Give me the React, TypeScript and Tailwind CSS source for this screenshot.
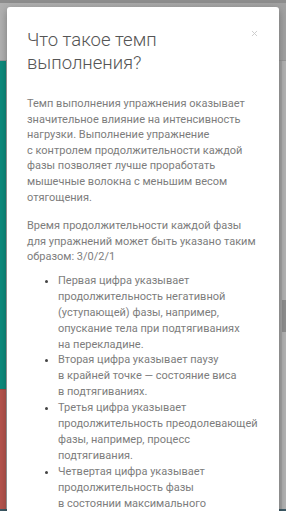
import { X } from "lucide-react"

const steps = [
  "Первая цифра указывает продолжительность негативной (уступающей) фазы, например, опускание тела при подтягиваниях на\u00a0перекладине.",
  "Вторая цифра указывает паузу в\u00a0крайней точке — состояние виса в\u00a0подтягиваниях.",
  "Третья цифра указывает продолжительность преодолевающей фазы, например, процесс подтягивания.",
  "Четвертая цифра указывает продолжительность фазы в\u00a0состоянии максимального сокращения мышц.",
]

export default function App() {
  return (
    <div className="relative w-[286px] h-[511px] overflow-hidden bg-[#a3a3a3] font-['Roboto',sans-serif]">
      {/* page behind the backdrop */}
      <div className="flex flex-col h-full">
        <div className="h-[3px] bg-[#8d8d8d]" />
        <div className="h-[58px] bg-gradient-to-r from-[#b0b0b0] to-[#a2a2a2] border-b border-[#979797]" />
        <div className="flex flex-1">
          <div className="w-[6px] flex flex-col">
            <div className="h-[328px] bg-[#0d8a7c]" />
            <div className="flex-1 bg-[#b4544d] border-t border-[#a04840]" />
          </div>
          <div className="flex-1" />
          <div className="w-[4px] bg-[#b2b2b2] flex flex-col">
            <div className="h-[239px]" />
            <div className="h-[32px] bg-[#8e8e8e]" />
          </div>
        </div>
        <div className="h-[2px] bg-[#3d5a66]" />
      </div>

      {/* modal */}
      <div className="absolute left-[7px] top-[7px] w-[272px] bg-white rounded-t-[3px] shadow-[0_3px_9px_rgba(0,0,0,0.3)] px-[20px] pt-[22px] pb-[20px]">
        <button className="absolute right-[20px] top-[22px] text-[#cccccc]">
          <X size={9} strokeWidth={2.5} />
        </button>
        <h4 className="text-[18.5px] leading-[23px] font-light text-[#555555] pr-[30px]">
          Что такое темп выполнения?
        </h4>
        <div className="mt-[21px] text-[11px] leading-[15.6px] text-[#7d7d7d]">
          <p className="mb-[13px]">
            Темп выполнения упражнения оказывает значительное влияние на интенсивность нагрузки. Выполнение упражнение с&nbsp;контролем продолжительности каждой фазы позволяет лучше проработать мышечные волокна с&nbsp;меньшим весом отягощения.
          </p>
          <p className="mb-[8px]">
            Время продолжительности каждой фазы для упражнений может быть указано таким образом: 3/0/2/1
          </p>
          <ul className="list-disc pl-[31px] leading-[15.9px] marker:text-[#444444]">
            {steps.map((s, i) => (
              <li key={i}>{s}</li>
            ))}
          </ul>
        </div>
      </div>
    </div>
  )
}
